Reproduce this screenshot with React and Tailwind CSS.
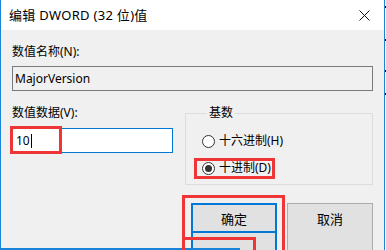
const font = "font-['Noto_Sans','Noto_Sans_CJK_SC',sans-serif]";

function Radio({ checked, label }) {
  return (
    <div className="flex items-center h-[16px]">
      <span className="w-[13px] h-[13px] rounded-full border border-[#333] bg-white flex items-center justify-center shrink-0">
        {checked && <span className="w-[7px] h-[7px] rounded-full bg-[#333]" />}
      </span>
      <span className="ml-[4px]">{label}</span>
    </div>
  );
}

export default function App() {
  return (
    <div className={`relative w-[386px] h-[250px] overflow-hidden bg-white text-[12px] leading-[16px] text-black ${font}`}>
      <div className="w-[385px] h-[250px] flex flex-col border-l border-r border-[#1883d7]">
        <div className="h-[30px] shrink-0 bg-white flex items-center justify-between pl-[8px] pr-[10px]">
          <span className="text-[13px] tracking-[0.3px]">编辑 DWORD (32 位)值</span>
          <svg width="11" height="11" viewBox="0 0 11 11" className="mr-[4px]">
            <path d="M0.5 0.5 L10.5 10.5 M10.5 0.5 L0.5 10.5" stroke="#111" strokeWidth="1" fill="none" />
          </svg>
        </div>
        <div className="flex-1 bg-[#f0f0f0] px-[11px] pt-[14px] flex flex-col">
          <div>数值名称(N):</div>
          <div className="mt-[6px] h-[25px] border border-[#7a7a7a] flex items-center px-[2px]">MajorVersion</div>
          <div className="mt-[14px] flex gap-[12px]">
            <div className="w-[161px] flex flex-col">
              <div>数值数据(V):</div>
              <div className="mt-[7px] h-[25px] border border-[#0078d7] bg-white flex items-center px-[3px]">
                <span>10</span>
                <span className="w-px h-[14px] bg-black ml-px" />
              </div>
            </div>
            <fieldset className="flex-1 h-[80px] border border-[#dcdcdc] px-[16px]">
              <legend className="ml-[5px] px-[2px]">基数</legend>
              <div className="flex flex-col gap-[11px] pt-[12px]">
                <Radio label="十六进制(H)" />
                <Radio checked label="十进制(D)" />
              </div>
            </fieldset>
          </div>
          <div className="mt-[18px] flex justify-end gap-[10px]">
            <div className="relative w-[86px] h-[50px] bg-[#e1e1e1] border-x-2 border-t-2 border-[#0078d7] flex justify-center pt-[6px] text-[13px]">
              <span>确定</span>
              <div className="absolute left-[-2px] right-[-2px] top-[26px] h-[2px] bg-[#0078d7]" />
            </div>
            <div className="w-[86px] h-[50px] bg-[#e1e1e1] border border-[#adadad] flex justify-center pt-[7px] text-[13px]">
              <span>取消</span>
            </div>
          </div>
        </div>
      </div>
      {/* window bottom edge */}
      <div className="absolute left-0 top-[248px] w-[240px] h-[2px] bg-[#1883d7]" />
      {/* dotted artifacts on the right edge */}
      <div className="absolute left-[385px] top-[6px] w-px h-[2px] bg-black" />
      <div className="absolute left-[385px] top-[39px] w-px h-[2px] bg-black" />
      <div className="absolute left-[385px] top-[70px] w-px h-[2px] bg-black" />
      <div className="absolute left-[385px] top-[93px] w-px h-[2px] bg-black" />
      {/* red annotation boxes */}
      <div className="absolute left-[10px] top-[126px] w-[52px] h-[28px] border-[3px] border-[#ef3535]" />
      <div className="absolute left-[194px] top-[158px] w-[81px] h-[21px] border-[3px] border-[#ef3535]" />
      <div className="absolute left-[182px] top-[195px] w-[103px] h-[60px] border-x-[3px] border-t-[3px] border-[#ef3535]" />
      <div className="absolute left-[182px] top-[237px] w-[74px] h-[3px] bg-[#ef3535]" />
      <div className="absolute left-[253px] top-[237px] w-[3px] h-[15px] bg-[#ef3535]" />
    </div>
  );
}
